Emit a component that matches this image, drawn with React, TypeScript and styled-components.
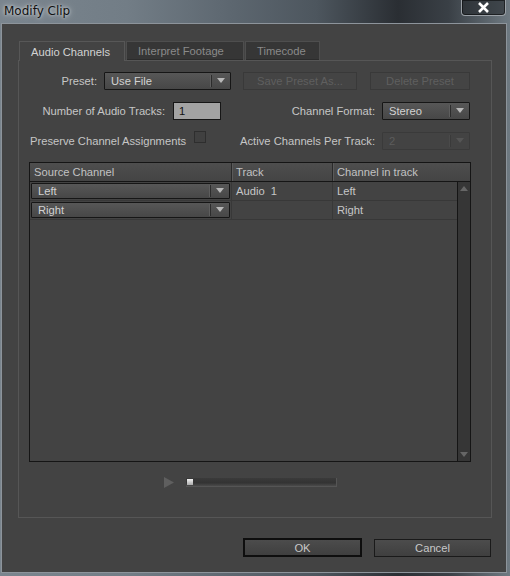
import React from "react";
import styled, { createGlobalStyle, css } from "styled-components";

const GlobalStyle = createGlobalStyle`
  html, body {
    margin: 0;
    padding: 0;
    background: #3c4550;
  }
  body {
    font-family: "Liberation Sans", Arial, sans-serif;
    font-size: 11.2px;
  }
`;

const tabs = [
  { label: "Audio Channels", width: 106, active: true },
  { label: "Interpret Footage", width: 118 },
  { label: "Timecode", width: 75 }
];

const rows = [
  { source: "Left", track: "Audio  1", channel: "Left" },
  { source: "Right", track: "", channel: "Right" }
];

const App = () => {
  return (
    <Screen>
      <GlobalStyle />
      <TitleBar>
        <Title>Modify Clip</Title>
        <CloseButton>
          <svg width="13" height="11" viewBox="0 0 13 11">
            <path d="M2 1 L11 10 M11 1 L2 10" stroke="#fff" strokeWidth="2.6" />
          </svg>
        </CloseButton>
      </TitleBar>
      <Body>
        <Tabs>
          {tabs.map((t) => (
            <Tab key={t.label} active={t.active} width={t.width}>
              {t.label}
            </Tab>
          ))}
        </Tabs>
        <Panel>
          <Row>
            <Label width={78}>Preset:</Label>
            <Select width={127} style={{ marginLeft: 7 }}>
              <span>Use File</span>
              <Arrow />
            </Select>
            <GhostButton width={114} style={{ marginLeft: 12 }}>Save Preset As...</GhostButton>
            <GhostButton width={100} style={{ marginLeft: 13 }}>Delete Preset</GhostButton>
          </Row>
          <Row>
            <Label width={146}>Number of Audio Tracks:</Label>
            <NumberInput>1</NumberInput>
            <RightGroup>
              <Label>Channel Format:</Label>
              <Select width={88}>
                <span>Stereo</span>
                <Arrow />
              </Select>
            </RightGroup>
          </Row>
          <Row>
            <CheckLabel>Preserve Channel Assignments</CheckLabel>
            <Checkbox />
            <RightGroup>
              <Label>Active Channels Per Track:</Label>
              <Select width={88} disabled>
                <span>2</span>
                <Arrow disabled />
              </Select>
            </RightGroup>
          </Row>
          <Table>
            <HeaderRow>
              <HeadCell width={202}>Source Channel</HeadCell>
              <HeadCell width={101}>Track</HeadCell>
              <HeadCell>Channel in track</HeadCell>
            </HeaderRow>
            <TableBody>
              <Rows>
                {rows.map((r) => (
                  <DataRow key={r.source}>
                    <Cell width={202}>
                      <Select width={199} small>
                        <span>{r.source}</span>
                        <Arrow />
                      </Select>
                    </Cell>
                    <Cell width={101}>{r.track}</Cell>
                    <Cell>{r.channel}</Cell>
                  </DataRow>
                ))}
              </Rows>
              <Scrollbar>
                <ScrollArrow />
                <ScrollArrow down />
              </Scrollbar>
            </TableBody>
          </Table>
          <Player>
            <svg width="11" height="11" viewBox="0 0 11 11">
              <path d="M0 0 L10 5.5 L0 11 Z" fill="#5f5f5f" />
            </svg>
            <Slider>
              <Thumb />
            </Slider>
          </Player>
        </Panel>
        <Footer>
          <DialogButton primary>OK</DialogButton>
          <DialogButton>Cancel</DialogButton>
        </Footer>
      </Body>
    </Screen>
  );
};

export default App;

const Screen = styled.div`
  width: 510px;
  height: 576px;
  display: flex;
  flex-direction: column;
  overflow: hidden;
  background: linear-gradient(90deg, #7a858e 0%, #727d86 25%, #5d6770 45%, #4d565e 62%, #2a2e33 78%, #3a4046 88%, #6f7a82 100%);
`;

const TitleBar = styled.div`
  height: 23px;
  flex-shrink: 0;
  display: flex;
  justify-content: space-between;
  align-items: flex-start;
`;

const Title = styled.div`
  margin: 4px 0 0 4px;
  font-family: "DejaVu Sans", sans-serif;
  font-size: 12px;
  color: #111;
  text-shadow: 0 0 6px rgba(255, 255, 255, 0.7), 0 0 3px rgba(255, 255, 255, 0.6);
`;

const CloseButton = styled.div`
  width: 43px;
  height: 15px;
  margin-right: 4px;
  display: flex;
  align-items: center;
  justify-content: center;
  border: 1px solid #9aa0a6;
  border-top: none;
  border-radius: 0 0 4px 4px;
  background: rgba(30, 32, 36, 0.55);
  box-shadow: inset 0 0 0 1px rgba(0, 0, 0, 0.5);
`;

const Body = styled.div`
  flex: 1;
  margin: 0 3px 3px 1px;
  border: 1px solid #8d949b;
  background: #434343;
  padding: 17px 14px 0 16px;
  display: flex;
  flex-direction: column;
`;

const Tabs = styled.div`
  display: flex;
  height: 19px;
  padding-left: 1px;
`;

const Tab = styled.div<{ active?: boolean; width: number }>`
  width: ${(p) => p.width}px;
  padding-left: 11px;
  display: flex;
  align-items: center;
  box-sizing: border-box;
  margin-right: 1px;
  border: 1px solid #575757;
  border-bottom: none;
  ${(p) =>
    p.active
      ? css`
          background: #434343;
          color: #d2d2d2;
          height: 20px;
          margin-bottom: -1px;
          position: relative;
          z-index: 1;
        `
      : css`
          background: #363636;
          color: #8a8a8a;
          border-color: #4e4e4e;
          height: 19px;
          box-shadow: inset 0 -1px 0 #2c2c2c;
        `}
`;

const Panel = styled.div`
  height: 458px;
  box-sizing: border-box;
  border: 1px solid #565656;
  padding: 11px 0 0 0;
  display: flex;
  flex-direction: column;
  width: 474px;
`;

const Row = styled.div`
  display: flex;
  align-items: center;
  height: 18px;
  width: 451px;
  margin-bottom: 12px;
  color: #c6c6c6;
`;

const Label = styled.div<{ width?: number }>`
  ${(p) => (p.width ? `width: ${p.width}px;` : "")}
  text-align: right;
  white-space: nowrap;
  color: #c6c6c6;
`;

const RightGroup = styled.div`
  margin-left: auto;
  display: flex;
  align-items: center;
  gap: 7px;
`;

const Select = styled.div<{ width: number; disabled?: boolean; small?: boolean }>`
  width: ${(p) => p.width}px;
  height: ${(p) => (p.small ? 16 : 18)}px;
  box-sizing: border-box;
  display: flex;
  align-items: center;
  justify-content: space-between;
  padding-left: 6px;
  border: 1px solid ${(p) => (p.disabled ? "#3a3a3a" : "#161616")};
  background: ${(p) =>
    p.disabled ? "#434343" : "linear-gradient(#575757, #474747)"};
  color: ${(p) => (p.disabled ? "#5c5c5c" : "#d2d2d2")};
  border-radius: 1px;
`;

const Arrow = styled.div<{ disabled?: boolean }>`
  width: 18px;
  height: 12px;
  border-left: 1px solid ${(p) => (p.disabled ? "#3a3a3a" : "#2c2c2c")};
  box-shadow: -1px 0 0 ${(p) => (p.disabled ? "#4a4a4a" : "#5e5e5e")};
  position: relative;
  &::after {
    content: "";
    position: absolute;
    left: 5px;
    top: 3px;
    border-left: 4px solid transparent;
    border-right: 4px solid transparent;
    border-top: 5px solid ${(p) => (p.disabled ? "#555" : "#b8b8b8")};
  }
`;

const GhostButton = styled.div<{ width: number }>`
  width: ${(p) => p.width}px;
  height: 18px;
  box-sizing: border-box;
  border: 1px solid #393939;
  background: #444;
  color: #5f5f5f;
  display: flex;
  align-items: center;
  justify-content: center;
`;

const NumberInput = styled.div`
  margin-left: 8px;
  width: 48px;
  height: 18px;
  box-sizing: border-box;
  border: 1px solid #161616;
  background: #a3a3a3;
  color: #111;
  padding-left: 5px;
  display: flex;
  align-items: center;
`;

const CheckLabel = styled.div`
  margin-left: 11px;
  white-space: nowrap;
`;

const Checkbox = styled.div`
  width: 12px;
  height: 12px;
  box-sizing: border-box;
  margin-left: 8px;
  margin-top: -8px;
  border: 1px solid #2e2e2e;
  background: #404040;
`;

const Table = styled.div`
  margin: 0 0 0 10px;
  width: 442px;
  height: 300px;
  box-sizing: border-box;
  border: 1px solid #151515;
  display: flex;
  flex-direction: column;
`;

const HeaderRow = styled.div`
  height: 18px;
  flex-shrink: 0;
  display: flex;
  background: linear-gradient(#4e4e4e, #444);
  border-bottom: 1px solid #151515;
`;

const HeadCell = styled.div<{ width?: number }>`
  ${(p) => (p.width ? `width: ${p.width}px;` : "flex: 1;")}
  box-sizing: border-box;
  padding-left: 4px;
  display: flex;
  align-items: center;
  color: #c2c2c2;
  border-right: 1px solid #2a2a2a;
  box-shadow: 1px 0 0 #5a5a5a;
  &:last-child {
    border-right: none;
    box-shadow: none;
  }
`;

const TableBody = styled.div`
  flex: 1;
  display: flex;
`;

const Rows = styled.div`
  flex: 1;
`;

const DataRow = styled.div`
  height: 19px;
  display: flex;
  border-bottom: 1px solid #383838;
  box-sizing: border-box;
`;

const Cell = styled.div<{ width?: number }>`
  ${(p) => (p.width ? `width: ${p.width}px;` : "flex: 1;")}
  box-sizing: border-box;
  padding-left: 4px;
  display: flex;
  align-items: center;
  white-space: pre;
  color: #c6c6c6;
  border-right: 1px solid #383838;
  &:first-child {
    padding-left: 1px;
  }
  &:last-child {
    border-right: none;
  }
`;

const Scrollbar = styled.div`
  width: 12px;
  background: #363636;
  border-left: 1px solid #151515;
  display: flex;
  flex-direction: column;
  justify-content: space-between;
  align-items: center;
  padding: 4px 0;
`;

const ScrollArrow = styled.div<{ down?: boolean }>`
  width: 0;
  height: 0;
  border-left: 4px solid transparent;
  border-right: 4px solid transparent;
  ${(p) =>
    p.down
      ? "border-top: 5px solid #666;"
      : "border-bottom: 5px solid #666;"}
`;

const Player = styled.div`
  display: flex;
  align-items: center;
  gap: 11px;
  margin: 15px 0 0 145px;
  height: 11px;
`;

const Slider = styled.div`
  width: 151px;
  height: 9px;
  box-sizing: border-box;
  background: linear-gradient(#3a3a3a, #333 60%, #4a4a4a);
  border-right: 1px solid #555;
  border-bottom: 1px solid #555;
  position: relative;
`;

const Thumb = styled.div`
  position: absolute;
  left: 1px;
  top: 1px;
  width: 6px;
  height: 6px;
  background: linear-gradient(#f2f2f2, #a8a8a8);
`;

const Footer = styled.div`
  display: flex;
  justify-content: flex-end;
  align-items: center;
  gap: 12px;
  margin-top: 20px;
  width: 473px;
`;

const DialogButton = styled.div<{ primary?: boolean }>`
  width: ${(p) => (p.primary ? 119 : 117)}px;
  height: ${(p) => (p.primary ? 19 : 18)}px;
  box-sizing: border-box;
  display: flex;
  align-items: center;
  justify-content: center;
  color: #c8c8c8;
  background: linear-gradient(#4c4c4c, #3f3f3f);
  border: ${(p) => (p.primary ? "2px solid #0e0e0e" : "1px solid #1a1a1a")};
`;
